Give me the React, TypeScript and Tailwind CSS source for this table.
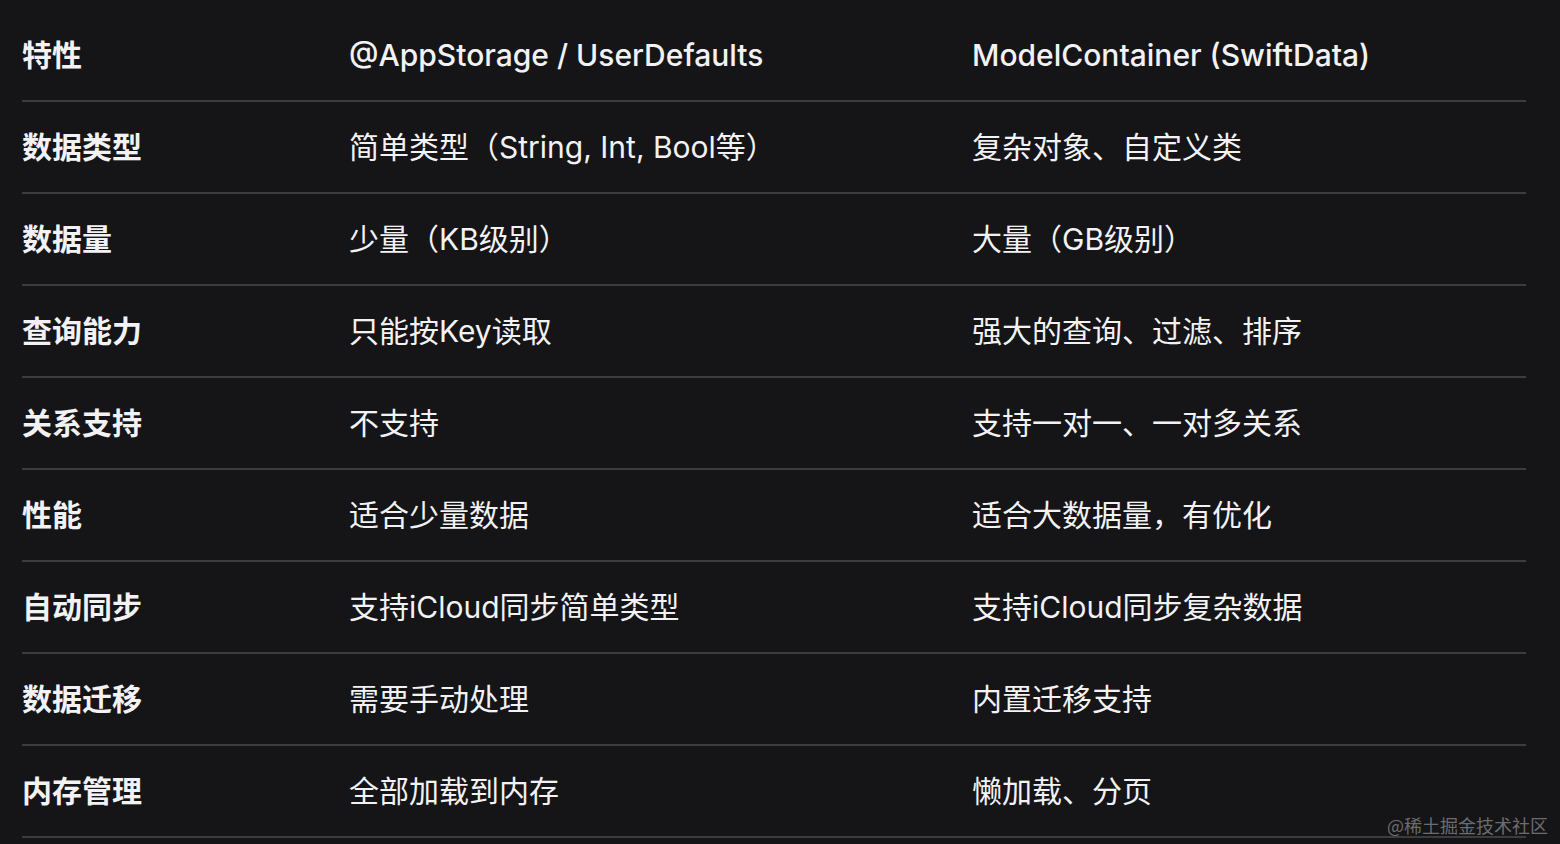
const rows: [string, string, string][] = [
  ["数据类型", "简单类型（String, Int, Bool等）", "复杂对象、自定义类"],
  ["数据量", "少量（KB级别）", "大量（GB级别）"],
  ["查询能力", "只能按Key读取", "强大的查询、过滤、排序"],
  ["关系支持", "不支持", "支持一对一、一对多关系"],
  ["性能", "适合少量数据", "适合大数据量，有优化"],
  ["自动同步", "支持iCloud同步简单类型", "支持iCloud同步复杂数据"],
  ["数据迁移", "需要手动处理", "内置迁移支持"],
  ["内存管理", "全部加载到内存", "懒加载、分页"],
];

export default function App() {
  return (
    <div className="relative h-[844px] w-[1560px] overflow-hidden bg-[#151517] pt-[10px] pl-[22px] font-['Inter','Noto_Sans_CJK_SC',sans-serif] text-[30px] text-[#f2f2f4]">
      <div className="w-[1504px]">
        <div className="grid h-[92px] grid-cols-[327px_623px_1fr] items-center border-b-2 border-[#3c3c3e]">
          <div className="font-semibold">特性</div>
          <div className="font-medium">@AppStorage / UserDefaults</div>
          <div className="font-medium">ModelContainer (SwiftData)</div>
        </div>
        {rows.map((r) => (
          <div
            key={r[0]}
            className="grid h-[92px] grid-cols-[327px_623px_1fr] items-center border-b-2 border-[#3c3c3e]"
          >
            <div className="font-bold">{r[0]}</div>
            <div>{r[1]}</div>
            <div>{r[2]}</div>
          </div>
        ))}
      </div>
      <div className="absolute right-[12px] bottom-[5px] font-['Noto_Sans_CJK_SC',sans-serif] text-[18px] text-[#6c6c6e]">
        @稀土掘金技术社区
      </div>
    </div>
  );
}
